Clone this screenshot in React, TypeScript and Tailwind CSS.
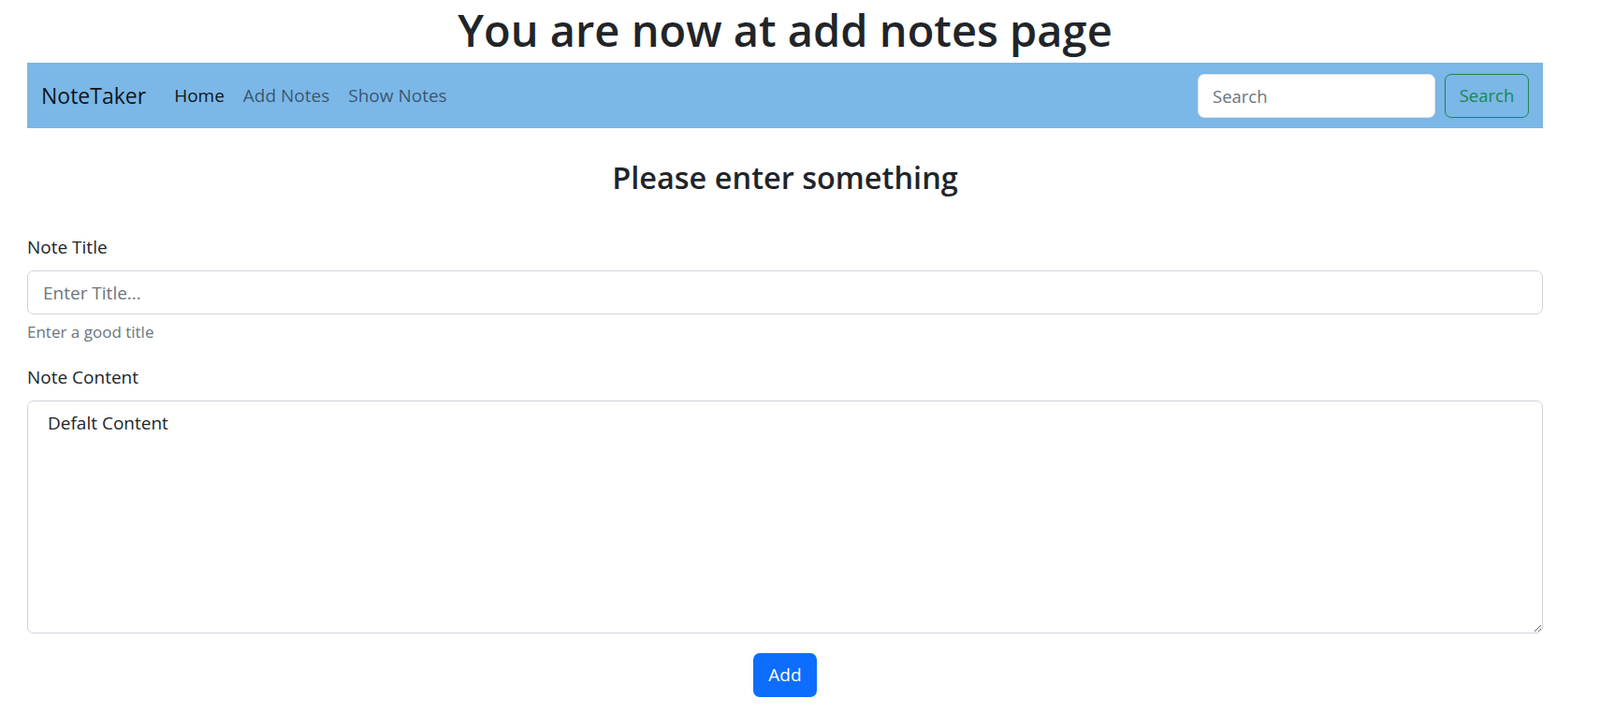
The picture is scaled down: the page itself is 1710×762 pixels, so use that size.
import React from "react";

export default function App() {
  return (
    <div className="min-h-[762px] w-full bg-white font-['Open_Sans','Noto_Sans',sans-serif] text-[#212529]">
      <div className="ml-[29px] w-[1620px]">
        <h1 className="text-center text-[47px] font-semibold leading-[64px]">
          You are now at add notes page
        </h1>

        <nav className="mt-[3px] flex h-[70px] items-center justify-between bg-[#7bb7e7] pl-[15px] pr-[15px]">
          <div className="flex items-center">
            <span className="mr-[20px] text-[23px] leading-[30px] text-[rgba(0,0,0,0.9)]">NoteTaker</span>
            <a className="px-[10px] text-[19px] leading-[28px] text-[rgba(0,0,0,0.9)]">Home</a>
            <a className="px-[10px] text-[19px] leading-[28px] text-[rgba(0,0,0,0.55)]">Add Notes</a>
            <a className="px-[10px] text-[19px] leading-[28px] text-[rgba(0,0,0,0.55)]">Show Notes</a>
          </div>
          <div className="flex items-center gap-[10px]">
            <input
              type="search"
              placeholder="Search"
              className="h-[47px] w-[254px] rounded-[7px] border border-[#dee2e6] bg-white px-[15px] text-[18.5px] outline-none placeholder:text-[#6c757d]"
            />
            <button className="h-[47px] w-[90px] rounded-[7px] border border-[#198754] text-[18.5px] text-[#198754]">
              Search
            </button>
          </div>
        </nav>

        <h3 className="mt-[33px] text-center text-[32.5px] font-semibold leading-[40px]">
          Please enter something
        </h3>

        <form className="mt-[40px]">
          <label className="block text-[19px] leading-[28px]">Note Title</label>
          <input
            type="text"
            placeholder="Enter Title..."
            className="mt-[11px] block h-[47px] w-full rounded-[7px] border border-[#ced4da] px-[16px] text-[19px] outline-none placeholder:text-[#6c757d]"
          />
          <div className="mt-[7px] text-[17px] leading-[24px] text-[#6c757d]">Enter a good title</div>

          <label className="mt-[22px] block text-[19px] leading-[28px]">Note Content</label>
          <textarea
            readOnly
            value="Defalt Content"
            className="mt-[11px] block h-[249px] w-full rounded-[7px] border border-[#ced4da] pb-[8px] pl-[21px] pr-[16px] pt-[8px] text-[19px] leading-[30px] text-[#212529] outline-none"
          />
          <div className="mt-[21px] flex justify-center">
            <button
              type="button"
              className="h-[47px] w-[68px] rounded-[7px] bg-[#0d6efd] text-[19px] text-white"
            >
              Add
            </button>
          </div>
        </form>
      </div>
    </div>
  );
}
